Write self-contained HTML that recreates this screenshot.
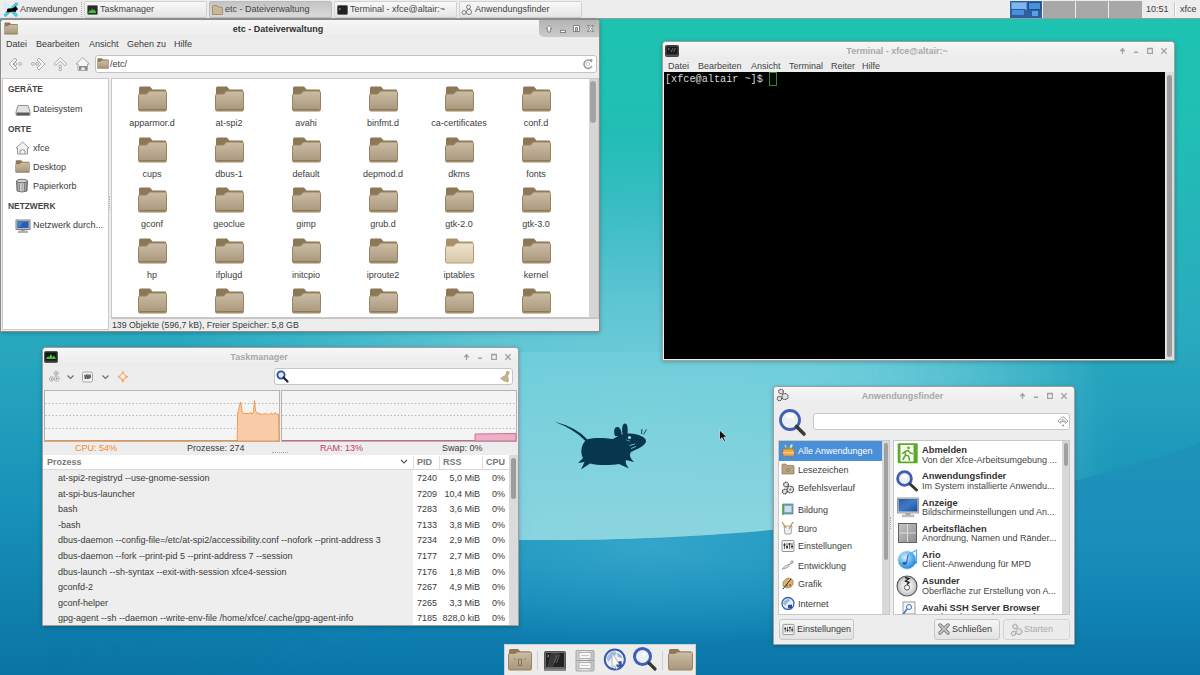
<!DOCTYPE html>
<html><head><meta charset="utf-8">
<style>
*{margin:0;padding:0;box-sizing:border-box}
html,body{width:1200px;height:675px;overflow:hidden}
body{position:relative;font-family:"Liberation Sans",sans-serif;font-size:9px;color:#3a3a3a;line-height:9px;background:#20b8b8}
.a{position:absolute}
.t{position:absolute;white-space:pre;line-height:9px}
.b{font-weight:bold}
.win{position:absolute;background:#ededed;border:1px solid #a39d9d;border-radius:4px 4px 0 0;overflow:hidden;box-shadow:0 1px 4px rgba(0,0,0,.25)}
.tb{position:absolute;left:0;top:0;right:0;height:18px;background:linear-gradient(#f6f6f6,#ebebeb)}
.ttl{position:absolute;top:5px;left:0;right:0;text-align:center;color:#a8a8a8;font-weight:bold;white-space:pre}
.task{position:absolute;top:1px;height:17px;width:123px;border:1px solid #d2d2d2;border-radius:2px;background:linear-gradient(#f8f8f8,#e6e6e6)}
.task.act{background:linear-gradient(#c4c4c4,#dadada);border-color:#bdbdbd}
.task .t{left:15px;top:3px;color:#444}
.white{position:absolute;background:#fff;border:1px solid #c6c6c6}
.sb{position:absolute;background:#d6d6d6}
.th{position:absolute;background:#a4a4a4;border-radius:3px}
</style></head><body>
<!-- background -->
<svg class="a" style="left:0;top:0" width="1200" height="675">
<defs>
<linearGradient id="bg1" x1="0" y1="0" x2="0" y2="675" gradientUnits="userSpaceOnUse">
<stop offset="0.03" stop-color="#1ec3b1"/>
<stop offset="0.2" stop-color="#21beb5"/>
<stop offset="0.49" stop-color="#2aaabf"/>
<stop offset="0.74" stop-color="#1893b9"/>
<stop offset="1" stop-color="#0a74a4"/>
</linearGradient>
<linearGradient id="below" x1="0" y1="450" x2="0" y2="675" gradientUnits="userSpaceOnUse">
<stop offset="0" stop-color="#1f92b9"/>
<stop offset="0.4" stop-color="#1a8fbb"/>
<stop offset="0.7" stop-color="#1184b4"/>
<stop offset="1" stop-color="#0a76a8"/>
</linearGradient>
<radialGradient id="glow" cx="640" cy="430" r="480" gradientUnits="userSpaceOnUse" gradientTransform="translate(640 430) scale(1 0.62) translate(-640 -430)">
<stop offset="0" stop-color="#8ad6df" stop-opacity="0.95"/>
<stop offset="0.45" stop-color="#72cfdb" stop-opacity="0.7"/>
<stop offset="1" stop-color="#5ccad6" stop-opacity="0"/>
</radialGradient>
<linearGradient id="bandh" x1="0" y1="0" x2="1200" y2="0" gradientUnits="userSpaceOnUse">
<stop offset="0.2" stop-color="#fff" stop-opacity="0"/>
<stop offset="0.45" stop-color="#fff" stop-opacity="1"/>
<stop offset="0.66" stop-color="#fff" stop-opacity="1"/>
<stop offset="0.92" stop-color="#fff" stop-opacity="0"/>
</linearGradient>
<mask id="bandm"><rect width="1200" height="675" fill="url(#bandh)"/></mask>
<linearGradient id="bandv" x1="0" y1="352" x2="0" y2="545" gradientUnits="userSpaceOnUse">
<stop offset="0" stop-color="#6fcfdb"/>
<stop offset="1" stop-color="#92d7e1"/>
</linearGradient>
<clipPath id="above"><path d="M0,0 H1200 V443 C980,522 720,539 560,540 L0,541 Z"/></clipPath>
</defs>
<rect width="1200" height="675" fill="url(#bg1)"/>
<linearGradient id="belowh" x1="0" y1="0" x2="1200" y2="0" gradientUnits="userSpaceOnUse"><stop offset="0.04" stop-color="#fff" stop-opacity="0"/><stop offset="0.35" stop-color="#fff" stop-opacity="1"/></linearGradient>
<mask id="belowm"><rect width="1200" height="675" fill="url(#belowh)"/></mask>
<path d="M0,541 L560,540 C720,539 980,522 1200,443 V675 H0 Z" fill="url(#below)" mask="url(#belowm)"/>
<radialGradient id="lowglow" cx="650" cy="545" r="330" gradientUnits="userSpaceOnUse" gradientTransform="translate(650 545) scale(1 0.3) translate(-650 -545)">
<stop offset="0" stop-color="#36a8cc" stop-opacity="0.9"/>
<stop offset="1" stop-color="#36a8cc" stop-opacity="0"/>
</radialGradient>
<clipPath id="belowc"><path d="M0,541 L560,540 C720,539 980,522 1200,443 V675 H0 Z"/></clipPath>
<rect width="1200" height="675" fill="url(#lowglow)" clip-path="url(#belowc)"/>
<g clip-path="url(#above)">
<rect width="1200" height="675" fill="url(#glow)"/>
<path d="M0,352 H1200 V675 H0 Z" fill="url(#bandv)" mask="url(#bandm)" opacity="0.9"/>
</g>
</svg>

<!-- PANEL -->
<div class="a" style="left:0;top:0;width:1200px;height:19px;background:#ededed;border-bottom:1px solid #9a9a9a"></div>

<!-- panel content -->
<svg class="a" style="left:3px;top:2px" width="16" height="15" viewBox="0 0 16 15">
<path d="M2.5,2.5 L13,13 M13.5,2 L2.5,13" stroke="#56c6dc" stroke-width="3.4" stroke-linecap="round"/>
<path d="M2.5,2.5 L6.5,6.5" stroke="#dceffc" stroke-width="3.4" stroke-linecap="round"/>
<path d="M3.5,10.2 L4.2,7 Q6,5.8 8.5,6.5 L11.5,5.2 L12.8,3.8 L13.5,5.3 L15.2,7.2 L13.5,8.2 L12.5,10 L9.5,9.6 L6.5,10.3 Z" fill="#000"/>
</svg>
<div class="t" style="left:20px;top:5px;color:#3c3c3c">Anwendungen</div>
<div class="a" style="left:81px;top:2px;width:1px;height:15px;border-left:1px dotted #b0b0b0"></div>
<div class="task" style="left:84px"><svg class="a" style="left:2px;top:3px" width="11" height="10"><rect x=".5" y=".5" width="10" height="9" rx="1" fill="#2a2a2a" stroke="#777"/><path d="M1.5,7 L3,5 L4,6 L5,3 L6,6 L7,4 L9,7 L9,8 L1.5,8Z" fill="#3fc43a"/></svg><div class="t">Taskmanager</div></div>
<div class="task act" style="left:209px"><svg class="a" style="left:2px;top:3px" width="11" height="10"><path d="M.5,1.5 Q.5,.5 1.5,.5 L5,.5 L6,2 L10,2 L10.5,3 L10.5,9.5 L.5,9.5Z" fill="#c9b797" stroke="#9a8460" stroke-width=".8"/></svg><div class="t">etc - Dateiverwaltung</div></div>
<div class="task" style="left:334px"><svg class="a" style="left:2px;top:3px" width="11" height="10"><rect x=".5" y=".5" width="10" height="9" rx="1" fill="#222" stroke="#666"/><path d="M2,3 L3.5,4 L2,5" stroke="#bbb" fill="none" stroke-width=".7"/></svg><div class="t">Terminal - xfce@altair:~</div></div>
<div class="task" style="left:459px"><svg class="a" style="left:1px;top:2px" width="12" height="12" viewBox="0 0 12 12"><g fill="none" stroke="#777" stroke-width=".9"><circle cx="7.5" cy="3" r="2"/><circle cx="8" cy="8" r="2.6"/><circle cx="3" cy="8.5" r="2"/></g></svg><div class="t">Anwendungsfinder</div></div>
<!-- pager -->
<div class="a" style="left:1010px;top:1px;width:132px;height:17px;background:#a8a8a8"></div>
<div class="a" style="left:1010px;top:1px;width:32px;height:17px;background:#2f5f9f"></div>
<div class="a" style="left:1011px;top:2px;width:16px;height:8px;background:#7db8f0;border:1px solid #5a8fd0"></div>
<div class="a" style="left:1011px;top:9px;width:14px;height:7px;background:#4a90d9;border:1px solid #2b5ea0"></div>
<div class="a" style="left:1028px;top:2px;width:13px;height:8px;background:#4a90d9;border:1px solid #1e4f92"></div>
<div class="a" style="left:1031px;top:10px;width:8px;height:7px;background:#5aa0e6;border:1px solid #2b5ea0"></div>
<div class="a" style="left:1042px;top:1px;width:1px;height:17px;background:#ececec"></div>
<div class="a" style="left:1075px;top:1px;width:1px;height:17px;background:#ececec"></div>
<div class="a" style="left:1108px;top:1px;width:1px;height:17px;background:#ececec"></div>
<div class="t" style="left:1146px;top:5px;color:#3c3c3c">10:51</div>
<div class="a" style="left:1174px;top:2px;width:2px;height:15px;border-left:1px solid #c8c8c8;border-right:1px solid #fafafa"></div>
<div class="t" style="left:1180px;top:5px;color:#3c3c3c">xfce</div>

<svg width="0" height="0" style="position:absolute">
<defs>
<linearGradient id="fg" x1="0" y1="0" x2="0" y2="1"><stop offset="0" stop-color="#cbbda6"/><stop offset="1" stop-color="#a8967a"/></linearGradient>
<linearGradient id="fg2" x1="0" y1="0" x2="0" y2="1"><stop offset="0" stop-color="#efe3cc"/><stop offset="1" stop-color="#d8c7a8"/></linearGradient>
<symbol id="fold" viewBox="0 0 29 26">
<path d="M1,2 Q1,.5 2.5,.5 L12,.5 L14.5,3.5 L27,3.5 Q28,3.5 28,4.5 L28,13 L1,13 Z" fill="#8c7756"/>
<path d="M.5,9.5 Q.5,8 2,8 L8.5,8 L11.5,5 L27,5 Q28.5,5 28.5,6.5 L28.5,23.5 Q28.5,25 27,25 L2,25 Q.5,25 .5,23.5 Z" fill="url(#fg)" stroke="#9a835e" stroke-width="1"/>
<path d="M1.5,23.5 L27.5,23.5" stroke="#8f7a58" stroke-width="1"/>
</symbol>
<symbol id="fold2" viewBox="0 0 29 26">
<path d="M1,2 Q1,.5 2.5,.5 L12,.5 L14.5,3.5 L27,3.5 Q28,3.5 28,4.5 L28,13 L1,13 Z" fill="#a8916a"/>
<path d="M.5,9.5 Q.5,8 2,8 L8.5,8 L11.5,5 L27,5 Q28.5,5 28.5,6.5 L28.5,23.5 Q28.5,25 27,25 L2,25 Q.5,25 .5,23.5 Z" fill="url(#fg2)" stroke="#b29c74" stroke-width="1"/>
</symbol>
<symbol id="wbtn" viewBox="0 0 60 18">
</symbol>
</defs></svg>

<!-- FILE MANAGER -->
<div class="win" style="left:0;top:19px;width:600px;height:313px;border-color:#8f8a8a">
 <div class="tb"></div>
 <svg class="a" style="left:3px;top:2px" width="14" height="13"><use href="#fold"/></svg>
 <div class="ttl" style="color:#333;left:18px;right:62px">etc - Dateiverwaltung</div>
 <div class="a" style="left:538px;top:0;width:62px;height:17px;background:linear-gradient(#b4b4b4,#c2c2c2 60%,#cacaca);border-radius:0 0 0 5px"></div>
 <svg class="a" style="left:538px;top:0" width="62" height="17">
  <g fill="#fff" stroke="#7a7a7a" stroke-width=".9">
   <path d="M10,5.5 L13,8.7 L11.3,8.7 L11.3,12 L8.7,12 L8.7,8.7 L7,8.7 Z"/>
   <rect x="21.5" y="10.3" width="5" height="2.2"/>
   <path d="M34.5,5.5 L40.5,5.5 L40.5,11.5 L34.5,11.5 Z M36.5,7.5 L36.5,11.5 L38.5,11.5 L38.5,7.5 Z" fill-rule="evenodd"/>
   <path d="M48.5,5.5 L50.3,5.5 L51.5,7.1 L52.7,5.5 L54.5,5.5 L52.5,8.5 L54.5,11.5 L52.7,11.5 L51.5,9.9 L50.3,11.5 L48.5,11.5 L50.5,8.5 Z"/>
  </g>
 </svg>
 <div class="t" style="left:5px;top:20px">Datei</div>
 <div class="t" style="left:35px;top:20px">Bearbeiten</div>
 <div class="t" style="left:88px;top:20px">Ansicht</div>
 <div class="t" style="left:126px;top:20px">Gehen zu</div>
 <div class="t" style="left:173px;top:20px">Hilfe</div>
 <svg class="a" style="left:6px;top:36px" width="90" height="18" viewBox="0 0 90 18">
  <g fill="#f6f6f6" stroke="#a0a0a0" stroke-width=".9">
   <path d="M2,8 L8,2 L10,4 L6,8 L10,12 L8,14 Z"/>
   <circle cx="8.4" cy="7.9" r="1.4"/><circle cx="13.1" cy="7.9" r="1.4"/>
   <path d="M38,8 L32,2 L30,4 L34,8 L30,12 L32,14 Z"/>
   <circle cx="25.9" cy="7.9" r="1.4"/><circle cx="30" cy="7.9" r="1.4"/>
   <path d="M53.3,1.5 L59.8,8 L58,9.8 L53.3,5.1 L48.6,9.8 L46.8,8 Z"/>
   <circle cx="53.3" cy="10.3" r="1.3"/><circle cx="53.3" cy="13.3" r="1.3"/>
   <path d="M75.75,1.5 L82.5,8 L80.5,8 L80.5,14.5 L71,14.5 L71,8 L69,8 Z"/>
  </g>
  <rect x="72" y="10" width="8" height="4" fill="#8a8a8a"/>
  <path d="M74,14 L74,11.5 Q76,10.5 78,11.5 L78,14" fill="#eee" stroke="#999" stroke-width=".6"/>
 </svg>
 <div class="white" style="left:94px;top:35px;width:502px;height:18px;border-radius:3px;border-color:#c2c2c2"></div>
 <svg class="a" style="left:96px;top:38px" width="12" height="11"><use href="#fold"/></svg>
 <div class="t" style="left:109px;top:40px">/etc/</div>
 <svg class="a" style="left:581px;top:38px" width="12" height="12" viewBox="0 0 12 12"><path d="M9.5,3.5 A4.2,4.2 0 1 0 10,8" fill="none" stroke="#9a9a9a" stroke-width="1.6"/><path d="M7.5,1.5 L10.5,1 L10,4.5Z" fill="#9a9a9a"/><circle cx="6" cy="6" r="1.8" fill="none" stroke="#bbb" stroke-width=".8"/></svg>
 <!-- sidebar -->
 <div class="white" style="left:1px;top:58px;width:107px;height:252px;border-color:#cacaca"></div>
 <div class="t b" style="left:7px;top:65px;color:#444;font-size:8.4px">GERÄTE</div>
 <svg class="a" style="left:14px;top:84px" width="16" height="12" viewBox="0 0 16 12"><path d="M3,1.5 L13,1.5 L15,8 L15,10.5 Q15,11.5 14,11.5 L2,11.5 Q1,11.5 1,10.5 L1,8 Z" fill="#e2e2e2" stroke="#8a8a8a" stroke-width=".9"/><path d="M1.5,8.5 L14.5,8.5 L14.5,11 L1.5,11Z" fill="#5c5c5c"/></svg>
 <div class="t" style="left:32px;top:85px">Dateisystem</div>
 <div class="t b" style="left:7px;top:105px;color:#444;font-size:8.4px">ORTE</div>
 <svg class="a" style="left:14px;top:121px" width="15" height="14" viewBox="0 0 15 14"><path d="M7.5,1 L14,7 L12.5,7 L12.5,13 L2.5,13 L2.5,7 L1,7 Z" fill="#f4f4f4" stroke="#8c8c8c" stroke-width=".9"/><path d="M5,13 L5,9.5 Q7.5,8 10,9.5 L10,13" fill="none" stroke="#8c8c8c" stroke-width=".9"/></svg>
 <div class="t" style="left:32px;top:124px">xfce</div>
 <svg class="a" style="left:14px;top:140px" width="15" height="13"><use href="#fold"/></svg>
 <div class="t" style="left:32px;top:143px">Desktop</div>
 <svg class="a" style="left:14px;top:158px" width="14" height="15" viewBox="0 0 14 15"><defs><linearGradient id="trg" x1="0" y1="0" x2="1" y2="0"><stop offset="0" stop-color="#8a8a8a"/><stop offset=".45" stop-color="#e8e8e8"/><stop offset="1" stop-color="#7a7a7a"/></linearGradient></defs><path d="M1.5,3 L12.5,3 L12,13 Q7,15 2,13 Z" fill="url(#trg)" stroke="#555" stroke-width=".8"/><ellipse cx="7" cy="3" rx="5.5" ry="1.8" fill="#d0d0d0" stroke="#555" stroke-width=".8"/><path d="M4.5,5.5 V12.5 M7,5.5 V13 M9.5,5.5 V12.5" stroke="#6a6a6a" stroke-width=".7"/></svg>
 <div class="t" style="left:32px;top:162px">Papierkorb</div>
 <div class="t b" style="left:7px;top:182px;color:#444;font-size:8.4px">NETZWERK</div>
 <svg class="a" style="left:14px;top:199px" width="16" height="14" viewBox="0 0 16 14"><rect x="1" y="1" width="14" height="9.5" fill="#d4d4d4" stroke="#666" stroke-width=".8"/><rect x="2.3" y="2.2" width="11.4" height="7" fill="#2a5fae"/><path d="M3,3 L8,3 L5,8 L3,8Z" fill="#5a8fd8" opacity=".6"/><rect x="6.5" y="10.5" width="3" height="1.5" fill="#999"/><rect x="3.5" y="12" width="9" height="2" rx=".5" fill="#ccc" stroke="#777" stroke-width=".6"/></svg>
 <div class="t" style="left:32px;top:201px">Netzwerk durch...</div>
 <div class="a" style="left:108px;top:176px;width:1px;height:14px;border-left:1px dotted #b4b4b4"></div>
 <!-- icon view -->
 <div class="white" style="left:110px;top:58px;width:488px;height:240px;border-color:#c8c8c8;border-right:none"></div>
 <div class="sb" style="left:588px;top:58px;width:10px;height:240px;border:1px solid #c8c8c8;border-left:none"></div>
 <div class="th" style="left:589px;top:61px;width:6px;height:42px"></div>
 <svg class="a" style="left:137px;top:66.2px" width="29" height="26"><use href="#fold"/></svg><div class="t" style="left:91px;width:120px;text-align:center;top:99.4px;color:#3c3c3c">apparmor.d</div><svg class="a" style="left:214px;top:66.2px" width="29" height="26"><use href="#fold"/></svg><div class="t" style="left:168px;width:120px;text-align:center;top:99.4px;color:#3c3c3c">at-spi2</div><svg class="a" style="left:291px;top:66.2px" width="29" height="26"><use href="#fold"/></svg><div class="t" style="left:245px;width:120px;text-align:center;top:99.4px;color:#3c3c3c">avahi</div><svg class="a" style="left:368px;top:66.2px" width="29" height="26"><use href="#fold"/></svg><div class="t" style="left:322px;width:120px;text-align:center;top:99.4px;color:#3c3c3c">binfmt.d</div><svg class="a" style="left:444px;top:66.2px" width="29" height="26"><use href="#fold"/></svg><div class="t" style="left:398px;width:120px;text-align:center;top:99.4px;color:#3c3c3c">ca-certificates</div><svg class="a" style="left:521px;top:66.2px" width="29" height="26"><use href="#fold"/></svg><div class="t" style="left:475px;width:120px;text-align:center;top:99.4px;color:#3c3c3c">conf.d</div><svg class="a" style="left:137px;top:116.7px" width="29" height="26"><use href="#fold"/></svg><div class="t" style="left:91px;width:120px;text-align:center;top:149.9px;color:#3c3c3c">cups</div><svg class="a" style="left:214px;top:116.7px" width="29" height="26"><use href="#fold"/></svg><div class="t" style="left:168px;width:120px;text-align:center;top:149.9px;color:#3c3c3c">dbus-1</div><svg class="a" style="left:291px;top:116.7px" width="29" height="26"><use href="#fold"/></svg><div class="t" style="left:245px;width:120px;text-align:center;top:149.9px;color:#3c3c3c">default</div><svg class="a" style="left:368px;top:116.7px" width="29" height="26"><use href="#fold"/></svg><div class="t" style="left:322px;width:120px;text-align:center;top:149.9px;color:#3c3c3c">depmod.d</div><svg class="a" style="left:444px;top:116.7px" width="29" height="26"><use href="#fold"/></svg><div class="t" style="left:398px;width:120px;text-align:center;top:149.9px;color:#3c3c3c">dkms</div><svg class="a" style="left:521px;top:116.7px" width="29" height="26"><use href="#fold"/></svg><div class="t" style="left:475px;width:120px;text-align:center;top:149.9px;color:#3c3c3c">fonts</div><svg class="a" style="left:137px;top:167.2px" width="29" height="26"><use href="#fold"/></svg><div class="t" style="left:91px;width:120px;text-align:center;top:200.4px;color:#3c3c3c">gconf</div><svg class="a" style="left:214px;top:167.2px" width="29" height="26"><use href="#fold"/></svg><div class="t" style="left:168px;width:120px;text-align:center;top:200.4px;color:#3c3c3c">geoclue</div><svg class="a" style="left:291px;top:167.2px" width="29" height="26"><use href="#fold"/></svg><div class="t" style="left:245px;width:120px;text-align:center;top:200.4px;color:#3c3c3c">gimp</div><svg class="a" style="left:368px;top:167.2px" width="29" height="26"><use href="#fold"/></svg><div class="t" style="left:322px;width:120px;text-align:center;top:200.4px;color:#3c3c3c">grub.d</div><svg class="a" style="left:444px;top:167.2px" width="29" height="26"><use href="#fold"/></svg><div class="t" style="left:398px;width:120px;text-align:center;top:200.4px;color:#3c3c3c">gtk-2.0</div><svg class="a" style="left:521px;top:167.2px" width="29" height="26"><use href="#fold"/></svg><div class="t" style="left:475px;width:120px;text-align:center;top:200.4px;color:#3c3c3c">gtk-3.0</div><svg class="a" style="left:137px;top:217.7px" width="29" height="26"><use href="#fold"/></svg><div class="t" style="left:91px;width:120px;text-align:center;top:250.9px;color:#3c3c3c">hp</div><svg class="a" style="left:214px;top:217.7px" width="29" height="26"><use href="#fold"/></svg><div class="t" style="left:168px;width:120px;text-align:center;top:250.9px;color:#3c3c3c">ifplugd</div><svg class="a" style="left:291px;top:217.7px" width="29" height="26"><use href="#fold"/></svg><div class="t" style="left:245px;width:120px;text-align:center;top:250.9px;color:#3c3c3c">initcpio</div><svg class="a" style="left:368px;top:217.7px" width="29" height="26"><use href="#fold"/></svg><div class="t" style="left:322px;width:120px;text-align:center;top:250.9px;color:#3c3c3c">iproute2</div><svg class="a" style="left:444px;top:217.7px" width="29" height="26"><use href="#fold2"/></svg><div class="t" style="left:398px;width:120px;text-align:center;top:250.9px;color:#3c3c3c">iptables</div><svg class="a" style="left:521px;top:217.7px" width="29" height="26"><use href="#fold"/></svg><div class="t" style="left:475px;width:120px;text-align:center;top:250.9px;color:#3c3c3c">kernel</div><svg class="a" style="left:137px;top:268.2px" width="29" height="26"><use href="#fold"/></svg><svg class="a" style="left:214px;top:268.2px" width="29" height="26"><use href="#fold"/></svg><svg class="a" style="left:291px;top:268.2px" width="29" height="26"><use href="#fold"/></svg><svg class="a" style="left:368px;top:268.2px" width="29" height="26"><use href="#fold"/></svg><svg class="a" style="left:444px;top:268.2px" width="29" height="26"><use href="#fold"/></svg><svg class="a" style="left:521px;top:268.2px" width="29" height="26"><use href="#fold"/></svg>
 <div class="white" style="left:110px;top:298px;width:488px;height:0;border-width:1px 0 0 0"></div>
 <div class="t" style="left:111px;top:301px;font-size:8.75px">139 Objekte (596,7 kB), Freier Speicher: 5,8 GB</div>
</div>

<!-- TERMINAL -->
<div class="win" style="left:662px;top:41px;width:513px;height:320px">
 <div class="tb" style="height:17px"></div>
 <svg class="a" style="left:2px;top:3px" width="14" height="12" viewBox="0 0 14 12"><rect x=".5" y=".5" width="13" height="11" rx="1" fill="#555" stroke="#444"/><rect x="1.5" y="1.5" width="11" height="8" fill="#1a1a1a"/><path d="M3,3 L4.5,4 L3,5 M6,7 L8,3 M8.5,7 L10.5,3" stroke="#aaa" stroke-width=".6" fill="none"/></svg>
 <div class="ttl" style="left:16px;right:59px">Terminal - xfce@altair:~</div>
 <svg class="a" style="left:452px;top:1px" width="60" height="17">
  <g fill="none" stroke="#a2a2a2" stroke-width="1.2">
   <path d="M7.5,11 L7.5,5.5"/><path d="M5,8 L7.5,5 L10,8Z" fill="#a2a2a2" stroke-width=".6"/>
   <path d="M19,9.3 L23,9.3" stroke-width="1.6"/>
   <rect x="32.6" y="5.6" width="4.8" height="4.8"/><path d="M32,5.5 H38" stroke-width="1.6"/>
   <path d="M46.3,5.3 L51.7,10.7 M51.7,5.3 L46.3,10.7" stroke-width="1.3"/>
  </g>
 </svg>
 <div class="t" style="left:5px;top:20px;color:#444">Datei</div>
 <div class="t" style="left:35px;top:20px;color:#444">Bearbeiten</div>
 <div class="t" style="left:88px;top:20px;color:#444">Ansicht</div>
 <div class="t" style="left:126px;top:20px;color:#444">Terminal</div>
 <div class="t" style="left:168px;top:20px;color:#444">Reiter</div>
 <div class="t" style="left:199px;top:20px;color:#444">Hilfe</div>
 <div class="a" style="left:1px;top:30px;width:501px;height:287px;background:#000"></div>
 <div class="t" style="left:2px;top:32px;font-family:'Liberation Mono',monospace;font-size:10.2px;line-height:12px;color:#dadada">[xfce@altair ~]$ </div>
 <div class="a" style="left:106px;top:30px;width:8px;height:14px;border:1px solid #2f8f26"></div>
 <div class="sb" style="left:502px;top:30px;width:9px;height:288px;background:#dcdcdc;border-left:1px solid #e8e8e8"></div>
 <div class="th" style="left:504px;top:33px;width:5px;height:282px;background:#9c9c9c"></div>
</div>

<!-- TASK MANAGER -->
<div class="win" style="left:42px;top:347px;width:477px;height:279px">
 <div class="tb"></div>
 <svg class="a" style="left:1px;top:3px" width="14" height="12" viewBox="0 0 14 12"><rect x=".5" y=".5" width="13" height="11" rx="1" fill="#3a3a3a" stroke="#555"/><rect x="1.5" y="1.5" width="11" height="8" fill="#0d1a0d"/><path d="M2,8 L4,5 L5,6.5 L7,3 L8.5,6.5 L10,4.5 L12,8 Z" fill="#4fd13b"/><path d="M2,7 L12,7" stroke="#2b8a22" stroke-width=".5"/></svg>
 <div class="ttl" style="left:16px;right:59px">Taskmanager</div>
 <svg class="a" style="left:416px;top:1px" width="60" height="17">
  <g fill="none" stroke="#a2a2a2" stroke-width="1.2">
   <path d="M7.5,11 L7.5,5.5"/><path d="M5,8 L7.5,5 L10,8Z" fill="#a2a2a2" stroke-width=".6"/>
   <path d="M19,9.3 L23,9.3" stroke-width="1.6"/>
   <rect x="32.6" y="5.6" width="4.8" height="4.8"/><path d="M32,5.5 H38" stroke-width="1.6"/>
   <path d="M46.3,5.3 L51.7,10.7 M51.7,5.3 L46.3,10.7" stroke-width="1.3"/>
  </g>
 </svg>
 <svg class="a" style="left:5px;top:22px" width="90" height="14" viewBox="0 0 90 14">
  <defs><radialGradient id="stg" cx=".5" cy=".45" r=".5"><stop offset=".15" stop-color="#fff"/><stop offset=".7" stop-color="#fbb06a"/><stop offset="1" stop-color="#f07d1e"/></radialGradient></defs>
  <g fill="#e6e6e6" stroke="#7a7a7a" stroke-width=".8">
   <circle cx="8.2" cy="3.2" r="2.1" stroke-dasharray="1 .6"/><circle cx="8.6" cy="8.6" r="2.5" stroke-dasharray="1 .6"/><circle cx="3.6" cy="9" r="2.2" stroke-dasharray="1 .6"/>
  </g>
  <circle cx="8.2" cy="3.2" r=".7" fill="#777"/><circle cx="8.6" cy="8.6" r=".8" fill="#777"/><circle cx="3.6" cy="9" r=".7" fill="#777"/>
  <path d="M19.5,5.5 L22.5,8.5 L25.5,5.5" fill="none" stroke="#6a6a6a" stroke-width="1.1"/>
  <rect x="34.5" y="2" width="10" height="10" rx="1.5" fill="#f2f2f2" stroke="#a8a8a8" stroke-width="1"/>
  <path d="M36.5,5 L37.3,9 L38.2,4.5 L39.2,9 L40,4.5 L41,9 L42,4.5 L42.8,8" fill="none" stroke="#2a2a2a" stroke-width=".75"/>
  <path d="M54.5,5.5 L57.5,8.5 L60.5,5.5" fill="none" stroke="#6a6a6a" stroke-width="1.1"/>
  <path d="M74.8,1.5 Q75.6,5.7 79.8,6.8 Q75.6,7.9 74.8,12.3 Q74,7.9 69.8,6.8 Q74,5.7 74.8,1.5Z" fill="url(#stg)" stroke="#f28a30" stroke-width=".6"/>
 </svg>
 <div class="white" style="left:231px;top:20px;width:239px;height:17px;border-radius:3px;border-color:#c6c6c6"></div>
 <svg class="a" style="left:233px;top:22px" width="13" height="13" viewBox="0 0 13 13"><circle cx="5" cy="5" r="3.6" fill="#dfe8f5" stroke="#2b4f9a" stroke-width="1.8"/><path d="M7.5,7.5 L11.5,11.5" stroke="#222" stroke-width="2.2" stroke-linecap="round"/></svg>
 <svg class="a" style="left:456px;top:22px" width="12" height="13" viewBox="0 0 12 13"><path d="M8,1 L10.5,2.5 L8.5,6 Q10,9 9,12 Q5,11.5 1.5,8.5 Q4,6.5 6.5,5.5Z" fill="#c9b48a" stroke="#a48f62" stroke-width=".6"/></svg>
 <!-- graphs -->
 <svg class="a" style="left:1px;top:42px" width="236" height="52" viewBox="0 0 236 52">
  <rect x=".5" y=".5" width="235" height="51" fill="#f4f4f4" stroke="#b4b4b4"/>
  <g stroke="#b8b8b8" stroke-dasharray="1.5 2" stroke-width="1"><path d="M1,13.5 H235 M1,25.5 H235 M1,38.5 H235"/></g>
  <polygon points="193.2,51.0 193.6,24.0 195.0,18.0 196.5,12.0 198.0,21.0 200.0,24.0 201.0,23.0 202.0,23.6 203.0,23.2 204.0,23.7 205.0,23.8 206.0,22.6 207.0,22.5 208.0,24.2 209.5,22.0 210.5,10.5 211.5,21.0 212.5,22.0 213.5,24.0 214.5,23.2 215.5,23.1 216.5,25.1 217.5,23.7 218.5,24.7 219.5,23.7 220.5,24.2 221.5,22.9 222.5,24.2 223.5,24.8 224.5,23.9 225.5,24.4 226.5,24.2 227.5,22.7 228.5,24.5 229.5,24.0 230.5,23.3 231.5,22.6 232.5,24.8 233.5,23.7 234.5,24.4 235.0,51.0" fill="#f8cca6" stroke="#f3913f" stroke-width=".9"/>
  <path d="M1,50.5 H194" stroke="#f3913f" stroke-width="1"/>
 </svg>
 <svg class="a" style="left:238px;top:42px" width="236" height="52" viewBox="0 0 236 52">
  <rect x=".5" y=".5" width="235" height="51" fill="#f4f4f4" stroke="#b4b4b4"/>
  <g stroke="#b8b8b8" stroke-dasharray="1.5 2" stroke-width="1"><path d="M1,13.5 H235 M1,25.5 H235 M1,38.5 H235"/></g>
  <path d="M194,51 L194,44 L235,43.5 L235,51Z" fill="#eab0c6" stroke="#d3628e" stroke-width=".9"/>
  <path d="M1,50.5 H194" stroke="#d3628e" stroke-width="1"/>
 </svg>
 <div class="t" style="left:32px;top:96px;color:#f08a2c">CPU: 54%</div>
 <div class="t" style="left:144px;top:96px">Prozesse: 274</div>
 <div class="t" style="left:277px;top:96px;color:#c8386a">RAM: 13%</div>
 <div class="t" style="left:399px;top:96px">Swap: 0%</div>
 <div class="a" style="left:229px;top:104px;width:16px;height:1px;border-top:1px dotted #aaa"></div>
 <!-- tree -->
 <div class="a" style="left:0;top:107px;width:466px;height:171px;background:#fff"></div>
 <div class="a" style="left:0;top:121px;width:370px;height:157px;background:#eeeeee"></div>
 <div class="a" style="left:0;top:121px;width:466px;height:1px;background:#d8d8d8"></div>
 <div class="a" style="left:370px;top:108px;width:1px;height:13px;background:#e0e0e0"></div>
 <div class="a" style="left:396px;top:108px;width:1px;height:13px;background:#e0e0e0"></div>
 <div class="a" style="left:439px;top:108px;width:1px;height:13px;background:#e0e0e0"></div>
 <div class="t b" style="left:4px;top:110px;color:#777">Prozess</div>
 <svg class="a" style="left:357px;top:111px" width="8" height="6"><path d="M1,1 L4,4 L7,1" fill="none" stroke="#555" stroke-width="1.1"/></svg>
 <div class="t b" style="left:374px;top:110px;color:#777">PID</div>
 <div class="t b" style="left:400px;top:110px;color:#777">RSS</div>
 <div class="t b" style="left:443px;top:110px;color:#777">CPU</div>
 <div class="a" style="left:0;top:2px;width:466px;height:170px"> <div class="t" style="left:15px;top:124.0px">at-spi2-registryd --use-gnome-session</div><div class="t" style="left:374px;top:124.0px">7240</div><div class="t" style="left:397px;width:40px;text-align:right;top:124.0px">5,0 MiB</div><div class="t" style="left:437px;width:25px;text-align:right;top:124.0px">0%</div><div class="t" style="left:15px;top:139.6px">at-spi-bus-launcher</div><div class="t" style="left:374px;top:139.6px">7209</div><div class="t" style="left:397px;width:40px;text-align:right;top:139.6px">10,4 MiB</div><div class="t" style="left:437px;width:25px;text-align:right;top:139.6px">0%</div><div class="t" style="left:15px;top:155.2px">bash</div><div class="t" style="left:374px;top:155.2px">7283</div><div class="t" style="left:397px;width:40px;text-align:right;top:155.2px">3,6 MiB</div><div class="t" style="left:437px;width:25px;text-align:right;top:155.2px">0%</div><div class="t" style="left:15px;top:170.8px">-bash</div><div class="t" style="left:374px;top:170.8px">7133</div><div class="t" style="left:397px;width:40px;text-align:right;top:170.8px">3,8 MiB</div><div class="t" style="left:437px;width:25px;text-align:right;top:170.8px">0%</div><div class="t" style="left:15px;top:186.4px">dbus-daemon --config-file=/etc/at-spi2/accessibility.conf --nofork --print-address 3</div><div class="t" style="left:374px;top:186.4px">7234</div><div class="t" style="left:397px;width:40px;text-align:right;top:186.4px">2,9 MiB</div><div class="t" style="left:437px;width:25px;text-align:right;top:186.4px">0%</div><div class="t" style="left:15px;top:202.0px">dbus-daemon --fork --print-pid 5 --print-address 7 --session</div><div class="t" style="left:374px;top:202.0px">7177</div><div class="t" style="left:397px;width:40px;text-align:right;top:202.0px">2,7 MiB</div><div class="t" style="left:437px;width:25px;text-align:right;top:202.0px">0%</div><div class="t" style="left:15px;top:217.6px">dbus-launch --sh-syntax --exit-with-session xfce4-session</div><div class="t" style="left:374px;top:217.6px">7176</div><div class="t" style="left:397px;width:40px;text-align:right;top:217.6px">1,8 MiB</div><div class="t" style="left:437px;width:25px;text-align:right;top:217.6px">0%</div><div class="t" style="left:15px;top:233.2px">gconfd-2</div><div class="t" style="left:374px;top:233.2px">7267</div><div class="t" style="left:397px;width:40px;text-align:right;top:233.2px">4,9 MiB</div><div class="t" style="left:437px;width:25px;text-align:right;top:233.2px">0%</div><div class="t" style="left:15px;top:248.8px">gconf-helper</div><div class="t" style="left:374px;top:248.8px">7265</div><div class="t" style="left:397px;width:40px;text-align:right;top:248.8px">3,3 MiB</div><div class="t" style="left:437px;width:25px;text-align:right;top:248.8px">0%</div><div class="t" style="left:15px;top:264.4px">gpg-agent --sh --daemon --write-env-file /home/xfce/.cache/gpg-agent-info</div><div class="t" style="left:374px;top:264.4px">7185</div><div class="t" style="left:397px;width:40px;text-align:right;top:264.4px">828,0 kiB</div><div class="t" style="left:437px;width:25px;text-align:right;top:264.4px">0%</div> </div>
 <div class="sb" style="left:466px;top:107px;width:9px;height:171px;background:#dadada"></div>
 <div class="th" style="left:468px;top:110px;width:5px;height:41px;background:#9c9c9c"></div>
</div>

<!-- APP FINDER -->
<div class="win" style="left:773px;top:386px;width:302px;height:259px">
 <div class="tb"></div>
 <svg class="a" style="left:2px;top:1px" width="14" height="14" viewBox="0 0 14 14"><g fill="#e4e4e4" stroke="#444" stroke-width="1.1" stroke-dasharray="1.2 .5"><circle cx="5" cy="3.5" r="2.3"/><circle cx="9" cy="8.5" r="3"/><circle cx="3.5" cy="10.5" r="2.2"/></g></svg>
 <div class="ttl" style="left:16px;right:59px">Anwendungsfinder</div>
 <svg class="a" style="left:241px;top:1px" width="60" height="17">
  <g fill="none" stroke="#a2a2a2" stroke-width="1.2">
   <path d="M7.5,11 L7.5,5.5"/><path d="M5,8 L7.5,5 L10,8Z" fill="#a2a2a2" stroke-width=".6"/>
   <path d="M19,9.3 L23,9.3" stroke-width="1.6"/>
   <rect x="32.6" y="5.6" width="4.8" height="4.8"/><path d="M32,5.5 H38" stroke-width="1.6"/>
   <path d="M46.3,5.3 L51.7,10.7 M51.7,5.3 L46.3,10.7" stroke-width="1.3"/>
  </g>
 </svg>
 <svg class="a" style="left:4px;top:21px" width="30" height="30" viewBox="0 0 30 30"><circle cx="12" cy="12" r="9.5" fill="#eceff3" stroke="#3e61b3" stroke-width="2.8"/><ellipse cx="12" cy="8" rx="4" ry="2.5" fill="#fff" opacity=".8"/><path d="M18.5,18.5 L26,26" stroke="#3a3a3a" stroke-width="3.6" stroke-linecap="round"/></svg>
 <div class="white" style="left:39px;top:26px;width:257px;height:17px;border-radius:3px;border-color:#c6c6c6"></div>
 <svg class="a" style="left:283px;top:28px" width="12" height="12" viewBox="0 0 12 12"><path d="M1,6 L6,1.5 L11,6 L9.5,7.5 L6,4.5 L2.5,7.5Z M3,8.5 L6,6 L9,8.5" fill="#fafafa" stroke="#888" stroke-width=".8"/><circle cx="6" cy="10.5" r=".9" fill="#888"/></svg>
 <div class="white" style="left:4px;top:53px;width:112px;height:175px;border-color:#c8c8c8"></div>
 <div class="a" style="left:5px;top:54px;width:103px;height:19.5px;background:#4a90d9"></div>
 <div class="sb" style="left:108px;top:54px;width:7px;height:173px;background:#d8d8d8"></div>
 <div class="th" style="left:110px;top:56px;width:4px;height:117px;background:#a0a0a0"></div>
 <div class="a" style="left:116px;top:130px;width:1px;height:12px;border-left:1px dotted #aaa"></div>
 <svg class="a" style="left:7px;top:56px" width="14" height="14" viewBox="0 0 14 14"><path d="M3,3 L5,1 L6,6 Z" fill="#c9b890"/><path d="M8,6 L10,1 L12,2 L10,6Z" fill="#f0f0f0" stroke="#999" stroke-width=".5"/><circle cx="8" cy="5" r="1.5" fill="#5ab04a"/><rect x="2" y="6" width="11" height="7" fill="#f0a848" stroke="#b87420" stroke-width=".7"/><rect x="2" y="9" width="11" height="1.3" fill="#fbd48e"/></svg><div class="t" style="left:24px;top:60.3px;color:#fff">Alle Anwendungen</div><svg class="a" style="left:7px;top:75px" width="14" height="14" viewBox="0 0 14 14"><path d="M1,3 Q1,2 2,2 L5,2 L6,3.5 L12,3.5 Q13,3.5 13,4.5 L13,12 L1,12Z" fill="#b8a482" stroke="#8c7650" stroke-width=".7"/><circle cx="7" cy="8" r="1.6" fill="none" stroke="#776" stroke-width=".6"/></svg><div class="t" style="left:24px;top:78.9px;color:#3c3c3c">Lesezeichen</div><svg class="a" style="left:7px;top:94px" width="14" height="14" viewBox="0 0 14 14"><g fill="#e2e2e2" stroke="#3a3a3a" stroke-width="1.1" stroke-dasharray="1.3 .5"><circle cx="5" cy="3.5" r="2.4"/><circle cx="9.3" cy="8.5" r="3.3"/><circle cx="3.8" cy="10.5" r="2.4"/></g><circle cx="9.3" cy="8.5" r="1" fill="#666"/></svg><div class="t" style="left:24px;top:97.3px;color:#3c3c3c">Befehlsverlauf</div><svg class="a" style="left:7px;top:115px" width="14" height="14" viewBox="0 0 14 14"><rect x="2" y="2" width="10" height="10" fill="#7ab" stroke="#578" stroke-width=".7"/><rect x="3.5" y="4" width="7" height="6" fill="#cde"/><path d="M2,2 L2,13" stroke="#4a4" stroke-width="1.5"/></svg><div class="t" style="left:24px;top:118.7px;color:#3c3c3c">Bildung</div><svg class="a" style="left:7px;top:134px" width="14" height="14" viewBox="0 0 14 14"><path d="M3,5 L11,5 L10,13 L4,13Z" fill="#eee" stroke="#888" stroke-width=".7"/><path d="M5,7 L1,1 M8,8 L12,1" stroke="#b8913f" stroke-width="1.2"/></svg><div class="t" style="left:24px;top:138.1px;color:#3c3c3c">Büro</div><svg class="a" style="left:7px;top:152px" width="14" height="14" viewBox="0 0 14 14"><rect x="1" y="1.5" width="12" height="11" rx="1" fill="#f4f4f4" stroke="#888" stroke-width=".9"/><path d="M3.5,4 V10 M6,4 V10 M8.5,4 V10 M11,4 V10" stroke="#444" stroke-width=".8"/><path d="M2.5,6 H4.5 M5,8 H7 M7.5,5 H9.5 M10,7.5 H12" stroke="#222" stroke-width="1.4"/></svg><div class="t" style="left:24px;top:154.9px;color:#3c3c3c">Einstellungen</div><svg class="a" style="left:7px;top:171px" width="14" height="14" viewBox="0 0 14 14"><path d="M1,11 Q4,7 9,6 L12,5 L12,3 L10,3 L10,5 L7,9 Q4,11 1,11Z" fill="#ddd" stroke="#888" stroke-width=".7"/></svg><div class="t" style="left:24px;top:174.9px;color:#3c3c3c">Entwicklung</div><svg class="a" style="left:7px;top:189px" width="14" height="14" viewBox="0 0 14 14"><path d="M2,10 Q1,4 7,2 Q13,2 12,8 Q11,12 6,12Z" fill="#d9b27a" stroke="#9c7640" stroke-width=".7"/><circle cx="9" cy="9" r="1" fill="#e33"/><circle cx="6" cy="9.5" r="1" fill="#3a3"/><path d="M2,13 L10,3" stroke="#333" stroke-width="1"/></svg><div class="t" style="left:24px;top:193.3px;color:#3c3c3c">Grafik</div><svg class="a" style="left:7px;top:209px" width="14" height="14" viewBox="0 0 14 14"><circle cx="7" cy="7.5" r="6" fill="#e6eef8" stroke="#3a5fb0" stroke-width="1.3"/><path d="M2,7 Q4,3 8,3 L9,5 L6,7 L4,10Z" fill="#7d9bd6" opacity=".7"/><path d="M7,9 L11,8.5 L11,12 L7,12.5Z" fill="#2750a8"/></svg><div class="t" style="left:24px;top:212.8px;color:#3c3c3c">Internet</div>
 <div class="white" style="left:119px;top:53px;width:177px;height:175px;border-color:#c8c8c8"></div>
 <div class="sb" style="left:288px;top:54px;width:7px;height:173px;background:#d8d8d8"></div>
 <div class="th" style="left:290px;top:56px;width:4px;height:23px;background:#a0a0a0"></div>
 <svg class="a" style="left:122px;top:55px" width="24" height="24" viewBox="0 0 24 24"><rect x="1.7" y="1.3" width="20" height="20" rx="1" fill="#5aaa28"/><rect x="4.5" y="3" width="13" height="16.5" fill="#fff"/><circle cx="12.5" cy="5.8" r="1.4" fill="#5aaa28"/><path d="M7,17.5 L9.5,13 L9,9.5 L12,8.5 L14.5,11 L16.5,11.5 M9.5,13 L12.5,14 L13.5,18 M9,9.5 L6.5,11.5" stroke="#5aaa28" stroke-width="1.6" fill="none" stroke-linecap="round"/></svg><div class="t b" style="left:148px;top:58.8px;color:#333;font-size:9.3px">Abmelden</div><div class="t" style="left:148px;top:68.7px;color:#444">Von der Xfce-Arbeitsumgebung ...</div><svg class="a" style="left:122px;top:82px" width="24" height="24" viewBox="0 0 24 24"><circle cx="8.5" cy="9.5" r="7" fill="#eef1f5" stroke="#3d5fb3" stroke-width="2.6"/><circle cx="8.5" cy="9.5" r="5.6" fill="none" stroke="#2a3f7a" stroke-width=".6" opacity=".6"/><ellipse cx="9" cy="7" rx="2.5" ry="1.5" fill="#fff"/><path d="M14,15 L20.5,21" stroke="#3a3630" stroke-width="3" stroke-linecap="round"/></svg><div class="t b" style="left:148px;top:85.2px;color:#333;font-size:9.3px">Anwendungsfinder</div><div class="t" style="left:148px;top:95.1px;color:#444">Im System installierte Anwendu...</div><svg class="a" style="left:122px;top:108px" width="24" height="24" viewBox="0 0 24 24"><defs><linearGradient id="scr" x1="0" y1="0" x2="1" y2="1"><stop offset="0" stop-color="#2b5ca8"/><stop offset=".5" stop-color="#3f78c8"/><stop offset="1" stop-color="#1d4a90"/></linearGradient></defs><rect x="1.5" y="3" width="21" height="15" fill="#d8d8d8" stroke="#888" stroke-width=".8"/><rect x="2.5" y="4" width="19" height="12.5" fill="url(#scr)"/><rect x="9.5" y="18" width="5" height="2" fill="#aaa"/><rect x="6" y="20" width="12" height="1.8" rx=".5" fill="#c8c8c8" stroke="#999" stroke-width=".5"/></svg><div class="t b" style="left:148px;top:111.5px;color:#333;font-size:9.3px">Anzeige</div><div class="t" style="left:148px;top:121.4px;color:#444">Bildschirmeinstellungen und An...</div><svg class="a" style="left:122px;top:134px" width="24" height="24" viewBox="0 0 24 24"><defs><linearGradient id="wsg" x1="0" y1="0" x2="1" y2="1"><stop offset="0" stop-color="#c4c4c4"/><stop offset="1" stop-color="#8e8e8e"/></linearGradient></defs><rect x="2.5" y="2.5" width="18" height="19" fill="url(#wsg)" stroke="#606060" stroke-width="1"/><path d="M11.5,3 V21 M3,12 H20" stroke="#e0e0e0" stroke-width=".9"/></svg><div class="t b" style="left:148px;top:137.5px;color:#333;font-size:9.3px">Arbeitsflächen</div><div class="t" style="left:148px;top:147.4px;color:#444">Anordnung, Namen und Ränder...</div><svg class="a" style="left:122px;top:160px" width="24" height="24" viewBox="0 0 24 24"><defs><radialGradient id="arg" cx=".4" cy=".35" r=".65"><stop offset="0" stop-color="#d8efff"/><stop offset=".6" stop-color="#5cb0ee"/><stop offset="1" stop-color="#2f86d4"/></radialGradient></defs><circle cx="11" cy="13" r="9.3" fill="url(#arg)" stroke="#e8f2fa" stroke-width=".8"/><path d="M12,8 L20.5,3 L20.5,15" stroke="#5aaef0" stroke-width="1.2" fill="none"/><ellipse cx="18.8" cy="15.5" rx="2.2" ry="1.6" fill="#3a8ee0"/><ellipse cx="8.5" cy="16.5" rx="2" ry="1.4" fill="#1f5fa8"/><path d="M10.4,16.5 L12,8" stroke="#1f5fa8" stroke-width="1"/></svg><div class="t b" style="left:148px;top:163.5px;color:#333;font-size:9.3px">Ario</div><div class="t" style="left:148px;top:173.4px;color:#444">Client-Anwendung für MPD</div><svg class="a" style="left:122px;top:187px" width="24" height="24" viewBox="0 0 24 24"><defs><radialGradient id="cdg" cx=".5" cy=".5" r=".5"><stop offset="0" stop-color="#fff"/><stop offset=".5" stop-color="#e6e6e6"/><stop offset="1" stop-color="#bdbdbd"/></radialGradient></defs><circle cx="11" cy="12" r="10" fill="url(#cdg)" stroke="#555" stroke-width="1.1"/><circle cx="11" cy="13.5" r="2.6" fill="#fff" stroke="#555" stroke-width="1"/><path d="M9,3.5 L13,4.5 L9.5,7 L13,8.5 L11,10.5" stroke="#222" stroke-width="1.4" fill="none"/></svg><div class="t b" style="left:148px;top:190.2px;color:#333;font-size:9.3px">Asunder</div><div class="t" style="left:148px;top:200.1px;color:#444">Oberfläche zur Erstellung von A...</div><svg class="a" style="left:122px;top:213px" width="24" height="24" viewBox="0 0 24 24"><rect x="7" y="2" width="12" height="12" fill="#f6f6f6" stroke="#888" stroke-width=".8"/><circle cx="13" cy="7" r="2.5" fill="none" stroke="#3a6fc0" stroke-width="1"/><path d="M11,9 L6,16" stroke="#3a6fc0" stroke-width="1.4"/></svg><div class="t b" style="left:148px;top:216.5px;color:#333;font-size:9.3px">Avahi SSH Server Browser</div><div class="t" style="left:148px;top:226.4px;color:#444">Durchsuchen nach Zeroconf-...</div>
 <div class="a" style="left:118px;top:228px;width:182px;height:28px;background:#ededed"></div><div class="a" style="left:119px;top:227px;width:177px;height:1px;background:#c8c8c8"></div>
 <div class="a" style="left:5px;top:232px;width:75px;height:21px;border:1px solid #c6c6c6;border-radius:3px;background:linear-gradient(#f6f6f6,#e2e2e2)"></div>
 <svg class="a" style="left:8px;top:236px" width="13" height="13" viewBox="0 0 14 14"><rect x="1" y="1.5" width="12" height="11" rx="1" fill="#f4f4f4" stroke="#888" stroke-width=".9"/><path d="M3.5,4 V10 M6,4 V10 M8.5,4 V10 M11,4 V10" stroke="#444" stroke-width=".8"/><path d="M2.5,6 H4.5 M5,8 H7 M7.5,5 H9.5 M10,7.5 H12" stroke="#222" stroke-width="1.4"/></svg>
 <div class="t" style="left:23px;top:238px">Einstellungen</div>
 <div class="a" style="left:160px;top:232px;width:66px;height:21px;border:1px solid #c6c6c6;border-radius:3px;background:linear-gradient(#f6f6f6,#e2e2e2)"></div>
 <svg class="a" style="left:164px;top:236px" width="12" height="12" viewBox="0 0 12 12"><path d="M2,2 L10,10 M10,2 L2,10" stroke="#6e6e6e" stroke-width="3.4" stroke-linecap="round"/><path d="M2,2 L10,10 M10,2 L2,10" stroke="#c4c4c4" stroke-width="1.8" stroke-linecap="round"/></svg>
 <div class="t" style="left:178px;top:238px">Schließen</div>
 <div class="a" style="left:229px;top:232px;width:67px;height:21px;border:1px solid #d4d4d4;border-radius:3px;background:#ececec"></div>
 <svg class="a" style="left:236px;top:236px" width="14" height="14" viewBox="0 0 14 14"><g fill="#e0e0e0" stroke="#8a8a8a" stroke-width="1" stroke-dasharray="1.2 .5"><circle cx="5" cy="3.5" r="2.3"/><circle cx="9" cy="8.5" r="3"/><circle cx="3.5" cy="10.5" r="2.2"/></g></svg>
 <div class="t" style="left:250px;top:238px;color:#aaa">Starten</div>
</div>

<!-- MOUSE LOGO -->
<svg class="a" style="left:550px;top:415px" width="110" height="60" viewBox="0 0 110 60">
<g fill="#07364f">
<path d="M4,6.5 Q26,12 37.5,24.5 L35.5,26 Q25,14.5 4,6.5Z"/>
<path d="M36,25 C42,22 55,23 63,24 C68,21 72,18 80,18.5 C88,19 96,22 96,26 C96,30 88,34 81,37 C79,40 80,43 84,47 L76,45 C75,48 77,51 79,53.5 L69,49 C60,50.5 48,50.5 40,48.5 L31,54.5 L34.5,47 L28,48 L33,43 C30,38 31,30 36,25 Z"/>
<path d="M65,21 C63,15 65,11.5 67.5,12 C70.5,12.5 72,17 71.5,21 Z"/>
<path d="M72.5,19 C71.5,13 72.5,8.5 75,8.5 C77.5,8.5 78,13 77.5,19 Z"/>
</g>
<circle cx="79.5" cy="22.5" r="1.6" fill="#9fd8e2"/>
<path d="M76,24.5 Q77.5,26 80,26" stroke="#6fb6c8" stroke-width=".7" fill="none"/>
<path d="M79.5,30.5 L85,29 M81,33.5 L86,31.5" stroke="#7cc2d2" stroke-width=".9"/>
<path d="M91.5,19 L92,14 M93.5,19.5 L96.5,14.5" stroke="#07364f" stroke-width=".9"/>
</svg>
<!-- cursor -->
<svg class="a" style="left:718px;top:429px" width="12" height="14" viewBox="0 0 12 14"><path d="M1.5,1 L1.5,11 L4,8.7 L6,12.5 L7.5,11.8 L5.7,8.2 L9,8.2 Z" fill="#111" stroke="#eee" stroke-width=".7"/></svg>

<!-- DOCK -->
<div class="a" style="left:504px;top:644px;width:192px;height:31px;background:#ececec;border:1px solid #d0d0d0;border-bottom:none"></div>
<svg class="a" style="left:504px;top:644px" width="192" height="31" viewBox="0 0 192 31">
 <defs>
 <linearGradient id="dkf" x1="0" y1="0" x2="0" y2="1"><stop offset="0" stop-color="#cbbda6"/><stop offset="1" stop-color="#a8967a"/></linearGradient>
 </defs>
 <!-- home folder -->
 <path d="M5,6.5 Q5,5 6.5,5 L14,5 L16.5,7.5 L26,7.5 L26,14 L5,14Z" fill="#8c7756"/>
 <path d="M4.5,11 Q4.5,9.5 6,9.5 L11,9.5 L13,8 L26,8 Q27.5,8 27.5,9.5 L27.5,24.5 Q27.5,26 26,26 L6,26 Q4.5,26 4.5,24.5Z" fill="url(#dkf)" stroke="#9a835e"/>
 <path d="M14.5,15.5 Q16,14.5 17.5,15.5 L17.5,21.5 L14.5,21.5Z" fill="none" stroke="#7b6a4e" stroke-width=".9"/>
 <circle cx="11" cy="15" r=".7" fill="#7b6a4e"/><circle cx="21" cy="15" r=".7" fill="#7b6a4e"/>
 <path d="M33.5,7 V26" stroke="#cfcfcf"/>
 <!-- terminal -->
 <rect x="40.5" y="7.5" width="21" height="18" rx="1" fill="#6a6a6a" stroke="#555"/>
 <rect x="42" y="9" width="18" height="14" fill="#222"/>
 <path d="M47,9 L56,9 L49,23 L43,23Z" fill="#3a3a3a"/>
 <path d="M43.5,11 L45,12 L43.5,13" stroke="#bbb" stroke-width=".8" fill="none"/>
 <path d="M50,19 L53,11 M52.5,19 L55.5,11" stroke="#777" stroke-width=".7"/>
 <rect x="40" y="25" width="22" height="2" fill="#888"/>
 <!-- cabinet -->
 <defs><linearGradient id="cab" x1="0" y1="0" x2="1" y2="0"><stop offset="0" stop-color="#c8c8c8"/><stop offset=".5" stop-color="#ececec"/><stop offset="1" stop-color="#bdbdbd"/></linearGradient></defs>
 <rect x="72" y="6.5" width="18" height="20.5" rx="1" fill="url(#cab)" stroke="#a8a8a8"/>
 <path d="M72.5,16.5 H89.5" stroke="#9a9a9a"/>
 <rect x="75" y="8.5" width="12" height="6" fill="#f6f6f6" stroke="#9c9c9c" stroke-width=".7"/>
 <rect x="75" y="18.5" width="12" height="6" fill="#f6f6f6" stroke="#9c9c9c" stroke-width=".7"/>
 <path d="M77,11.5 H85 M77,21.5 H85" stroke="#bbb" stroke-width=".8"/>
 <!-- globe -->
 <circle cx="110.8" cy="15.5" r="10" fill="#eef3fa" stroke="#3a5cb0" stroke-width="2"/>
 <path d="M102.5,14 Q105,8 111,7 L113,10 L108,13.5 L104.5,18 Z" fill="#6d8fd0" opacity=".55"/>
 <path d="M113,9 Q117,10 118.5,14 L114,13 Z" fill="#5a7fc8" opacity=".6"/>
 <path d="M111.5,18 L117.5,17 L118,22.5 L111.5,23.5 Z" fill="#2a55a8"/>
 <path d="M108,8.5 L108,24 L110.5,21.5 L112.3,25.3 L114,24.5 L112.2,20.8 L115.5,20.5 Z" fill="#f6f6f6" stroke="#8a8a8a" stroke-width=".6"/>
 <!-- magnifier -->
 <circle cx="138.5" cy="12.5" r="8" fill="#eceff3" stroke="#3e5fb5" stroke-width="3"/>
 <ellipse cx="140" cy="10" rx="2.5" ry="1.6" fill="#fff"/>
 <path d="M145,19 L151,25" stroke="#3a3a35" stroke-width="3.2" stroke-linecap="round"/>
 <path d="M158.5,7 V26" stroke="#cfcfcf"/>
 <!-- folder -->
 <path d="M165,6.5 Q165,5 166.5,5 L174,5 L176.5,7.5 L187,7.5 L187,14 L165,14Z" fill="#8c7756"/>
 <path d="M164.5,11 Q164.5,9.5 166,9.5 L171,9.5 L173,8 L187,8 Q188.5,8 188.5,9.5 L188.5,24.5 Q188.5,26 187,26 L166,26 Q164.5,26 164.5,24.5Z" fill="url(#dkf)" stroke="#9a835e"/>
</svg>
</body></html>
